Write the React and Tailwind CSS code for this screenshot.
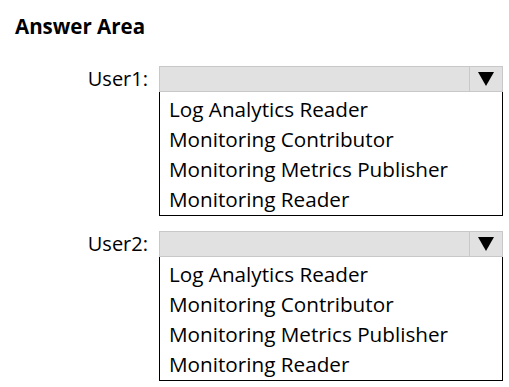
const roles = [
  'Log Analytics Reader',
  'Monitoring Contributor',
  'Monitoring Metrics Publisher',
  'Monitoring Reader',
];

function Dropdown({ label }) {
  return (
    <div className="flex items-start">
      <div className="w-[133px] h-[26px] flex items-center justify-end text-[20px] text-black leading-none">
        {label}
      </div>
      <div className="ml-[11px] w-[344px]">
        <div className="h-[26px] flex bg-[#e1e1e1] border border-[#c8c8c8]">
          <div className="flex-1" />
          <div className="w-[33px] border-l border-[#c8c8c8] flex items-center justify-center">
            <svg width="16" height="14" viewBox="0 0 16 14">
              <polygon points="0,0 16,0 8,14" fill="#000" />
            </svg>
          </div>
        </div>
        <div className="border border-black border-t-0 px-[9px] pt-[2px] pb-[1px]">
          {roles.map((r) => (
            <div key={r} className="h-[30px] leading-[30px] text-[20.7px] text-black whitespace-nowrap">
              {r}
            </div>
          ))}
        </div>
      </div>
    </div>
  );
}

export default function App() {
  return (
    <div
      className="w-[509px] h-[387px] bg-white pl-[15px] pt-[13px]"
      style={{ fontFamily: '"Open Sans", "Noto Sans", sans-serif' }}
    >
      <h1 className="text-[20.5px] font-bold leading-[26px] text-black">Answer Area</h1>
      <div className="mt-[27px] flex flex-col gap-[15px]">
        <Dropdown label="User1:" />
        <Dropdown label="User2:" />
      </div>
    </div>
  );
}
